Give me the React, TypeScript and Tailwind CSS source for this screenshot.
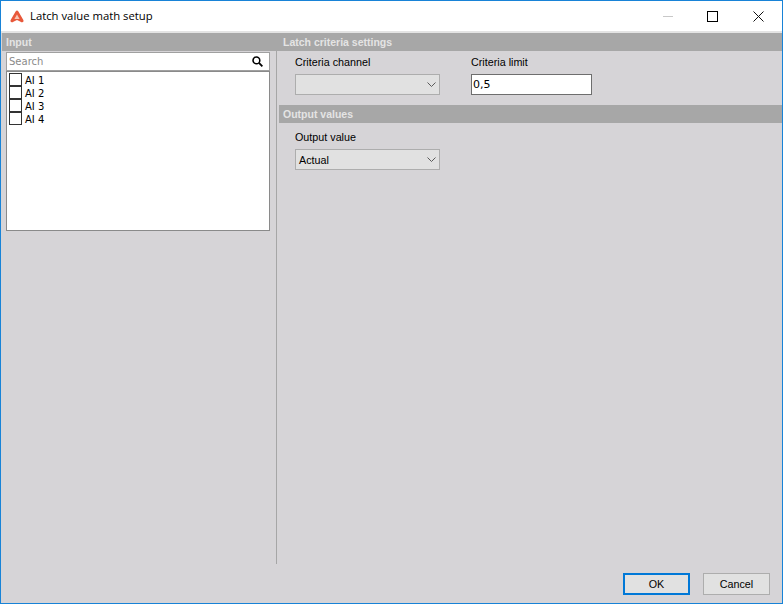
import React from "react";

const liberation = "font-['Liberation_Sans',sans-serif]";
const dejavu = "font-['DejaVu_Sans',sans-serif]";

function Chevron() {
  return (
    <svg width="9" height="5" viewBox="0 0 9 5" className="shrink-0" fill="none" stroke="#5a5a5a" strokeWidth="1">
      <path d="M0.5 0.5 L4.5 4.5 L8.5 0.5" />
    </svg>
  );
}

function Combo({ value }: { value?: string }) {
  return (
    <div className="w-[145px] h-[21px] border border-[#adadad] bg-[#e1e1e1] flex items-center justify-between pl-[3px] pr-[3px]">
      <span className="font-['Liberation_Sans',sans-serif] text-[10.75px] leading-none text-black pt-[1px]">{value}</span>
      <Chevron />
    </div>
  );
}

function Header({ children, className = "" }: { children: React.ReactNode; className?: string }) {
  return (
    <div className={`h-[18px] bg-[#a7a7a7] text-[#e4e4e4] font-['Liberation_Sans',sans-serif] text-[10.5px] font-bold leading-[18px] ${className}`}>
      {children}
    </div>
  );
}

export default function App() {
  return (
    <div className={`w-[783px] h-[604px] border border-[#1883d7] bg-[#d6d4d7] flex flex-col overflow-hidden ${liberation}`}>
      <div className="h-[30px] bg-white flex items-center shrink-0">
        <svg width="14" height="13" viewBox="0 0 14 13" className="ml-[9px]">
          <path d="M7 0.5 Q7.8 0.5 8.4 1.6 L13.2 9.8 Q14.2 11.8 12.4 12.3 Q11.6 12.5 10.6 11.8 L7 10 L3.4 11.8 Q2.4 12.5 1.6 12.3 Q-0.2 11.8 0.8 9.8 L5.6 1.6 Q6.2 0.5 7 0.5 Z" fill="#e8583a" />
          <path d="M7 4.6 L9.6 9 L4.4 9 Z" fill="#f8c4b4" />
        </svg>
        <span className="ml-[6px] font-['Open_Sans',sans-serif] text-[11.3px] text-black">Latch value math setup</span>
        <div className="ml-auto flex items-center">
          <div className="w-[10px] h-[1px] bg-[#c8c8c8] mr-[34px]" />
          <div className="w-[11px] h-[11px] border border-black mr-[35px]" />
          <svg width="11" height="11" viewBox="0 0 11 11" className="mr-[18px]" stroke="#111" strokeWidth="1">
            <path d="M0.5 0.5 L10.5 10.5 M10.5 0.5 L0.5 10.5" />
          </svg>
        </div>
      </div>
      <div className="h-[2px] bg-[#e3e3e3] shrink-0" />
      <div className="pl-[1px] shrink-0">
        <Header className="flex">
          <span className="w-[277px] pl-[4px]">Input</span>
          <span className="pl-[4px]">Latch criteria settings</span>
        </Header>
      </div>
      <div className="flex flex-1 min-h-0">
        <div className="w-[275px] shrink-0 pl-[5px] pt-[1px]">
          <div className="w-[264px] h-[19px] bg-white border border-[#a0a0a0] flex items-center justify-between pl-[2px] pr-[6px]">
            <span className={`${dejavu} text-[10px] leading-none text-[#8a8a8a]`}>Search</span>
            <svg width="11" height="11" viewBox="0 0 12 12" fill="none" stroke="#000" strokeWidth="1.7">
              <circle cx="4.8" cy="4.8" r="3.7" />
              <path d="M7.6 7.6 L11.3 11.3" strokeWidth="2" />
            </svg>
          </div>
          <div className="w-[264px] h-[160px] bg-white border border-[#8a8a8a] pl-[2px] pt-[1px]">
            {["AI 1", "AI 2", "AI 3", "AI 4"].map((t) => (
              <div key={t} className="h-[13px] flex items-center">
                <div className="w-[13px] h-[13px] border border-[#333] bg-white shrink-0" />
                <span className={`${dejavu} ml-[3px] pt-[2px] text-[10px] leading-none text-black`}>{t}</span>
              </div>
            ))}
          </div>
        </div>
        <div className="w-[1px] h-[513px] bg-[#a6a6a6] shrink-0" />
        <div className="flex-1 min-w-0 pl-[2px]">
          <div className="h-[54px] flex pl-[16px] pt-[3px]">
            <div className="flex flex-col w-[176px]">
              <span className="text-[10.75px] leading-[16px] text-black mb-[4px]">Criteria channel</span>
              <Combo />
            </div>
            <div className="flex flex-col">
              <span className="text-[10.75px] leading-[16px] text-black mb-[4px]">Criteria limit</span>
              <div className="w-[121px] h-[21px] bg-white border border-[#6e6e6e] flex items-center pl-[1px]">
                <span className={`${dejavu} text-[11px] leading-none text-black`}>0,5</span>
              </div>
            </div>
          </div>
          <Header className="pl-[4px]">Output values</Header>
          <div className="pl-[16px] pt-[6px] flex flex-col">
            <span className="text-[10.75px] leading-[16px] text-black mb-[4px]">Output value</span>
            <Combo value="Actual" />
          </div>
        </div>
      </div>
      <div className="h-[38px] shrink-0 flex justify-end gap-[13px] pr-[12px] pt-[8px]">
        <button className="w-[67px] h-[22px] bg-[#e1e1e1] border-2 border-[#0078d7] text-[10.75px] leading-none text-black">OK</button>
        <button className="w-[67px] h-[22px] bg-[#e1e1e1] border border-[#adadad] text-[10.75px] leading-none text-black">Cancel</button>
      </div>
    </div>
  );
}
